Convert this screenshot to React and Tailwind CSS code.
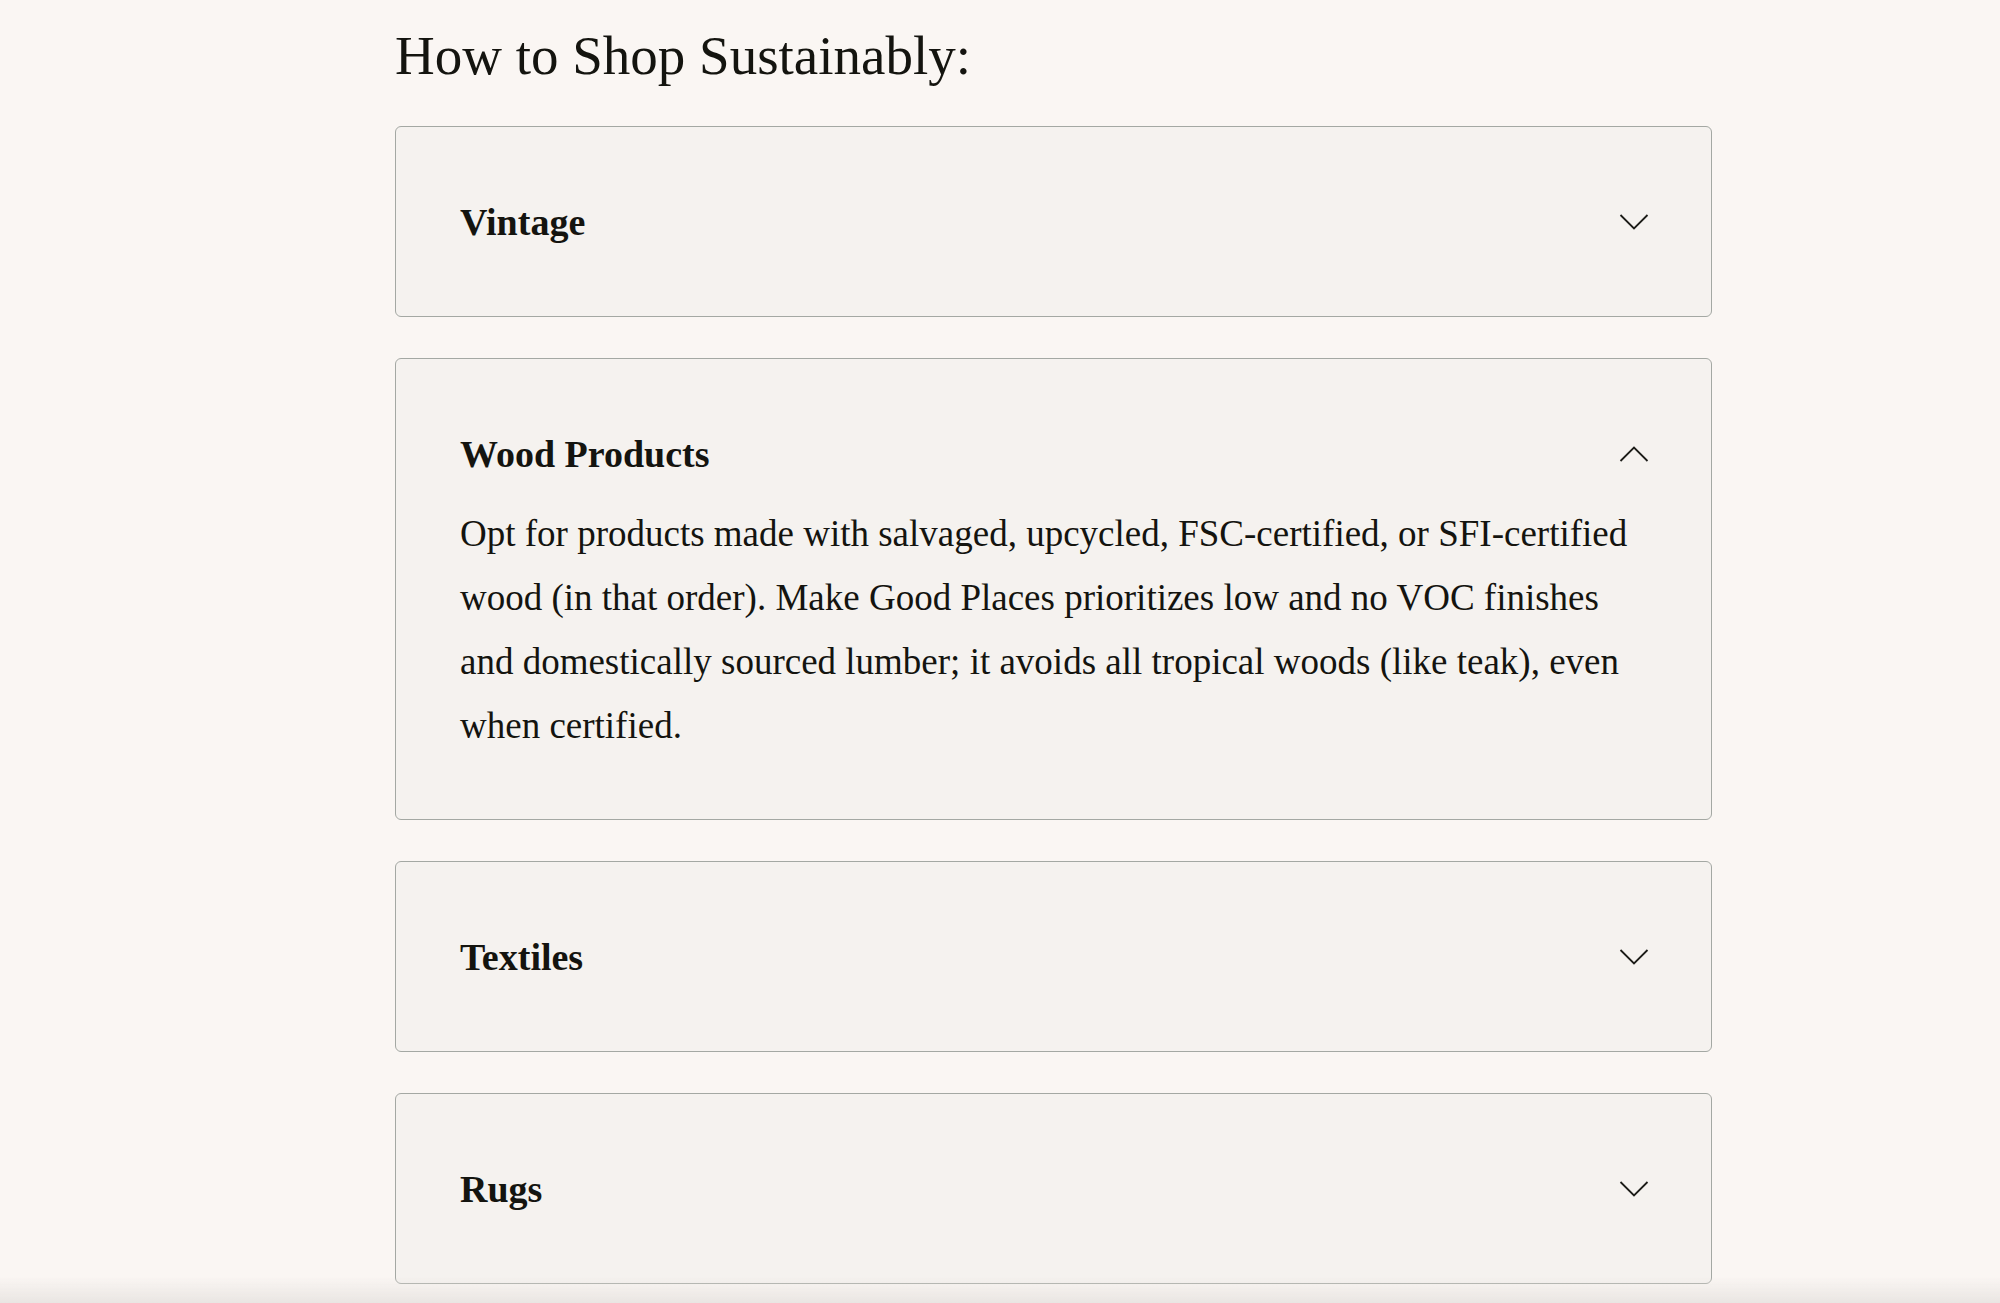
import { useState } from 'react'

const ITEMS = [
  { id: 'vintage', title: 'Vintage', body: '' },
  {
    id: 'wood',
    title: 'Wood Products',
    body: 'Opt for products made with salvaged, upcycled, FSC-certified, or SFI-certified wood (in that order). Make Good Places prioritizes low and no VOC finishes and domestically sourced lumber; it avoids all tropical woods (like teak), even when certified.',
  },
  { id: 'textiles', title: 'Textiles', body: '' },
  { id: 'rugs', title: 'Rugs', body: '' },
]

function Chevron({ up }) {
  return (
    <svg width="30" height="16" viewBox="0 0 30 16" fill="none" className="shrink-0">
      {up ? (
        <polyline points="1.5,15 15,1.5 28.5,15" stroke="#1c1c18" strokeWidth="1.8" />
      ) : (
        <polyline points="1.5,1 15,14.5 28.5,1" stroke="#1c1c18" strokeWidth="1.8" />
      )}
    </svg>
  )
}

function AccordionItem({ item, open, onToggle }) {
  return (
    <div className={`rounded-[6px] border border-[#a4a8a3] bg-[#f5f2ef] px-16 pt-[65px] ${open ? 'pb-[61px]' : 'pb-[63px]'}`}>
      <button
        onClick={onToggle}
        className="flex w-full items-center justify-between text-left cursor-pointer"
      >
        <span className="text-[38px] leading-[61px] font-bold text-[#14140f]">{item.title}</span>
        <span className="mr-[-2px] mt-[-2px]"><Chevron up={open} /></span>
      </button>
      {open && item.body && (
        <p className="mt-[17px] text-[37px] leading-[64px] text-[#14140f]">{item.body}</p>
      )}
    </div>
  )
}

export default function App() {
  const [openId, setOpenId] = useState('wood')

  return (
    <div
      className="relative min-h-screen overflow-hidden bg-[#faf6f3]"
      style={{ fontFamily: '"Liberation Serif", "Times New Roman", serif' }}
    >
      <div className="ml-[395px] w-[1317px] pt-[28px] pb-20">
        <h2 className="mb-[43px] text-[55px] leading-[55px] font-normal text-[#14140f]">
          How to Shop Sustainably:
        </h2>

        <div className="flex flex-col gap-[41px]">
          {ITEMS.map(item => (
            <AccordionItem
              key={item.id}
              item={item}
              open={openId === item.id}
              onToggle={() => setOpenId(o => (o === item.id ? null : item.id))}
            />
          ))}
        </div>
      </div>

      {/* bottom fade */}
      <div className="pointer-events-none fixed bottom-0 left-0 right-0 h-[26px] bg-gradient-to-b from-transparent to-[#e9e5e2]" />
    </div>
  )
}
